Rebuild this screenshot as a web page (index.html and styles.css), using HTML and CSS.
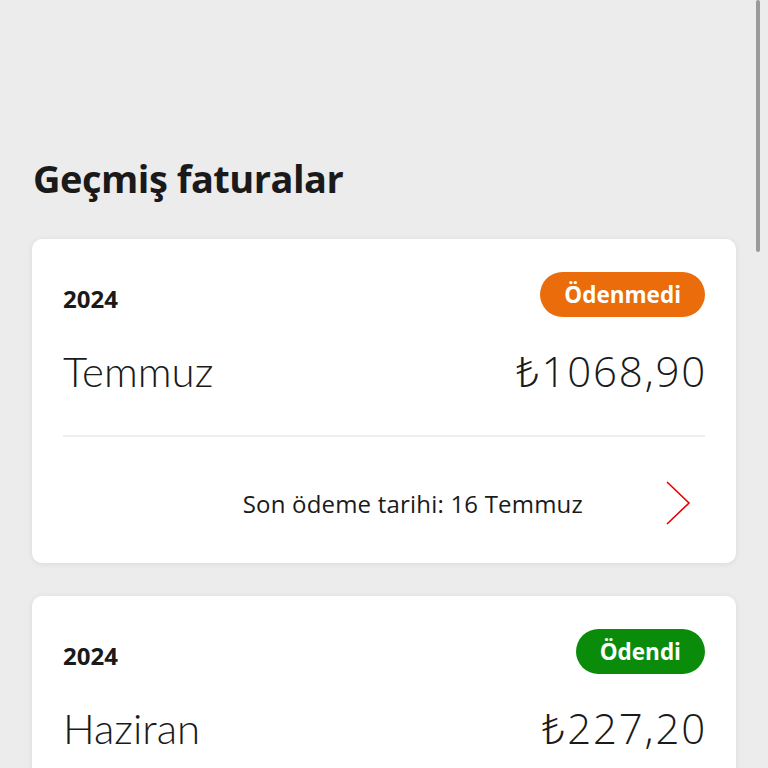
FILE: index.html
```html
<!DOCTYPE html>
<html lang="tr">
<head>
    <meta charset="UTF-8">
    <meta name="viewport" content="width=device-width, initial-scale=1.0">
    <title>Geçmiş faturalar</title>
    <link rel="stylesheet" href="styles.css">
</head>
<body>
    <div class="page">
        <h1 class="title">Geçmiş faturalar</h1>

        <div class="bill-card">
            <div class="bill-head">
                <span class="bill-year">2024</span>
                <span class="badge badge-unpaid">Ödenmedi</span>
            </div>
            <div class="bill-main">
                <span class="bill-month">Temmuz</span>
                <span class="bill-amount">₺1068,90</span>
            </div>
            <div class="bill-foot">
                <span class="due-date">Son ödeme tarihi: 16 Temmuz</span>
                <svg class="chevron" width="26" height="46" viewBox="0 0 26 46">
                    <path d="M2 2 L24 23 L2 44" fill="none" stroke="#e60000" stroke-width="1.6"/>
                </svg>
            </div>
        </div>

        <div class="bill-card">
            <div class="bill-head">
                <span class="bill-year">2024</span>
                <span class="badge badge-paid">Ödendi</span>
            </div>
            <div class="bill-main">
                <span class="bill-month">Haziran</span>
                <span class="bill-amount">₺227,20</span>
            </div>
        </div>
    </div>
    <div class="scrollbar"></div>
</body>
</html>
```

FILE: styles.css
```css
body {
    margin: 0;
    background-color: #ececec;
    font-family: 'Open Sans', 'Noto Sans', sans-serif;
    color: #1a1a1a;
}
.page {
    padding: 152px 32px 40px 32px;
    width: 704px;
}
.title {
    margin: 0 0 35px 1px;
    font-size: 38px;
    font-weight: 700;
    line-height: 52px;
    letter-spacing: -0.5px;
}
.bill-card {
    background-color: white;
    border-radius: 10px;
    box-shadow: 0 1px 6px rgba(0, 0, 0, 0.08);
    padding: 33px 31px 0 31px;
    margin-bottom: 33px;
}
.bill-head {
    display: flex;
    justify-content: space-between;
    align-items: flex-end;
}
.bill-year {
    font-size: 24px;
    font-weight: 700;
    line-height: 32px;
    margin-bottom: 2px;
}
.badge {
    height: 45px;
    line-height: 45px;
    padding: 0 24px;
    border-radius: 23px;
    color: white;
    font-size: 22.5px;
    font-weight: 700;
}
.badge-unpaid {
    background-color: #eb6c0b;
}
.badge-paid {
    background-color: #0a8c0a;
}
.bill-main {
    display: flex;
    justify-content: space-between;
    align-items: center;
    padding: 25px 0 35px 0;
    border-bottom: 2px solid #eeeeee;
}
.bill-month,
.bill-amount {
    font-size: 42px;
    font-weight: 300;
    line-height: 58px;
}
.bill-month {
    font-family: 'Lato', 'Open Sans', sans-serif;
}
.bill-amount {
    letter-spacing: 1.8px;
    margin-right: -2px;
}
.bill-foot {
    display: flex;
    justify-content: flex-end;
    align-items: center;
    gap: 82px;
    padding: 43px 14px 37px 0;
}
.due-date {
    font-size: 24px;
    letter-spacing: 0.2px;
}
.scrollbar {
    position: fixed;
    top: 0;
    right: 8px;
    width: 4px;
    height: 252px;
    border-radius: 2px;
    background-color: #9a9a9a;
}
```
